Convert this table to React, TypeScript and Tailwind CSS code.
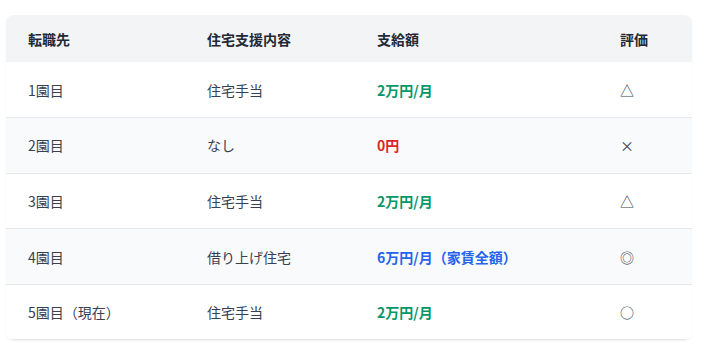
const rows = [
    { place: '1園目', support: '住宅手当', amount: '2万円/月', tone: 'green', mark: '△' },
    { place: '2園目', support: 'なし', amount: '0円', tone: 'red', mark: '×' },
    { place: '3園目', support: '住宅手当', amount: '2万円/月', tone: 'green', mark: '△' },
    { place: '4園目', support: '借り上げ住宅', amount: '6万円/月（家賃全額）', tone: 'blue', mark: '◎' },
    { place: '5園目（現在）', support: '住宅手当', amount: '2万円/月', tone: 'green', mark: '○' },
]

const toneClass: Record<string, string> = {
    green: 'text-[#059669]',
    red: 'text-[#dc2626]',
    blue: 'text-[#2563eb]',
}

export default function App() {
    return (
        <div className="min-h-[352px] w-[708px] bg-white pl-[6px] pr-[16px] pt-[15px] font-['Noto_Sans_CJK_JP','Noto_Sans',sans-serif]">
            <div className="overflow-hidden rounded-lg bg-white shadow-[0_1px_2px_rgba(0,0,0,0.06)]">
                <table className="w-full table-fixed border-collapse text-[14px] leading-5">
                    <colgroup>
                        <col className="w-[179px]" />
                        <col className="w-[170px]" />
                        <col className="w-[243px]" />
                        <col />
                    </colgroup>
                    <thead>
                        <tr className="bg-[#f3f4f6] text-left text-[#1f2937]">
                            <th className="h-[47px] px-[22px] font-bold">転職先</th>
                            <th className="px-[22px] font-bold">住宅支援内容</th>
                            <th className="px-[22px] font-bold">支給額</th>
                            <th className="px-[22px] font-bold">評価</th>
                        </tr>
                    </thead>
                    <tbody>
                        {rows.map((r, i) => (
                            <tr
                                key={r.place}
                                className={`border-b border-[#e5e7eb] text-[#374151] ${i % 2 === 1 ? 'bg-[#f9fafb]' : 'bg-white'}`}
                            >
                                <td className="h-[55.6px] px-[22px]">{r.place}</td>
                                <td className="px-[22px]">{r.support}</td>
                                <td className={`px-[22px] font-bold ${toneClass[r.tone]}`}>{r.amount}</td>
                                <td className="px-[22px] text-[#374151]">{r.mark}</td>
                            </tr>
                        ))}
                    </tbody>
                </table>
            </div>
        </div>
    )
}
